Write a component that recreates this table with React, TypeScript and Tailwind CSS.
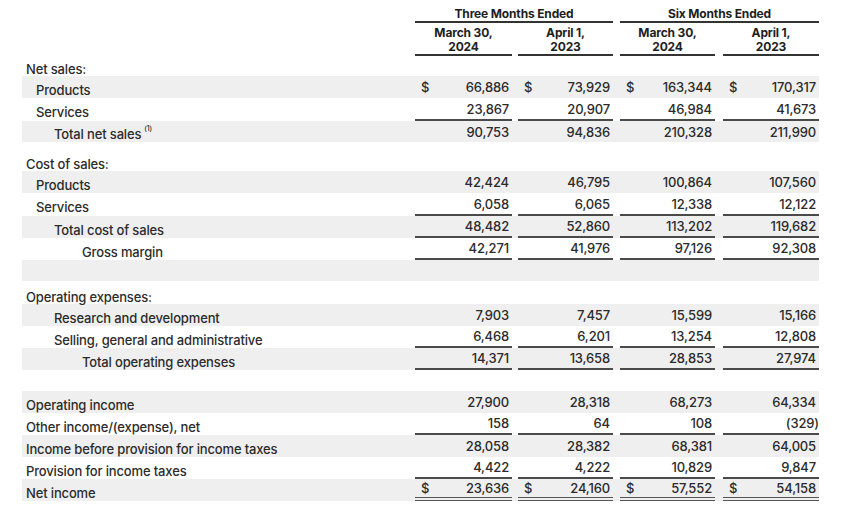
import React from 'react';

// ============================================================================
// ESTADO DE RESULTADOS CONDENSADO
// ============================================================================

type Line = 'none' | 'single' | 'double';

interface RowDef {
  label?: string;
  indent?: number;
  values?: string[];
  dollar?: boolean;
  line?: Line;
  stripe?: boolean;
  height: string;
  section?: boolean;
  note?: boolean;
}

const indentClasses = ['pl-[4px]', 'pl-[14px]', 'pl-[32px]', 'pl-[60px]'];
const cellClasses = ['w-[97px]', 'ml-[6px] w-[95px]', 'ml-[7px] w-[95px]', 'ml-[8px] w-[96px]'];

const rows: RowDef[] = [
  { label: 'Net sales:', indent: 0, section: true, height: 'h-[20px]' },
  { label: 'Products', indent: 1, values: ['66,886', '73,929', '163,344', '170,317'], dollar: true, stripe: true, height: 'h-[22px]' },
  { label: 'Services', indent: 1, values: ['23,867', '20,907', '46,984', '41,673'], line: 'single', height: 'h-[23px]' },
  { label: 'Total net sales', indent: 2, values: ['90,753', '94,836', '210,328', '211,990'], stripe: true, note: true, height: 'h-[21px]' },
  { label: 'Cost of sales:', indent: 0, section: true, height: 'h-[29px]' },
  { label: 'Products', indent: 1, values: ['42,424', '46,795', '100,864', '107,560'], stripe: true, height: 'h-[22px]' },
  { label: 'Services', indent: 1, values: ['6,058', '6,065', '12,338', '12,122'], line: 'single', height: 'h-[23px]' },
  { label: 'Total cost of sales', indent: 2, values: ['48,482', '52,860', '113,202', '119,682'], line: 'single', stripe: true, height: 'h-[22px]' },
  { label: 'Gross margin', indent: 3, values: ['42,271', '41,976', '97,126', '92,308'], line: 'single', height: 'h-[22px]' },
  { stripe: true, height: 'h-[21px]' },
  { label: 'Operating expenses:', indent: 0, section: true, height: 'h-[23px]' },
  { label: 'Research and development', indent: 2, values: ['7,903', '7,457', '15,599', '15,166'], stripe: true, height: 'h-[22px]' },
  { label: 'Selling, general and administrative', indent: 2, values: ['6,468', '6,201', '13,254', '12,808'], line: 'single', height: 'h-[22px]' },
  { label: 'Total operating expenses', indent: 3, values: ['14,371', '13,658', '28,853', '27,974'], line: 'single', stripe: true, height: 'h-[22px]' },
  { height: 'h-[21px]' },
  { label: 'Operating income', indent: 0, values: ['27,900', '28,318', '68,273', '64,334'], stripe: true, height: 'h-[22px]' },
  { label: 'Other income/(expense), net', indent: 0, values: ['158', '64', '108', '(329)'], line: 'single', height: 'h-[22px]' },
  { label: 'Income before provision for income taxes', indent: 0, values: ['28,058', '28,382', '68,381', '64,005'], stripe: true, height: 'h-[22px]' },
  { label: 'Provision for income taxes', indent: 0, values: ['4,422', '4,222', '10,829', '9,847'], line: 'single', height: 'h-[22px]' },
  { label: 'Net income', indent: 0, values: ['23,636', '24,160', '57,552', '54,158'], dollar: true, line: 'double', stripe: true, height: 'h-[22px]' },
];

const lineClass = (line?: Line) => {
  if (line === 'single') return 'border-b-2 border-[#4a4a4a]';
  if (line === 'double') return 'border-b-4 border-double border-[#555]';
  return '';
};

const ValueCell: React.FC<{ idx: number; value: string; dollar?: boolean; line?: Line }> = ({ idx, value, dollar, line }) => {
  const neg = value.startsWith('(');
  return (
    <div className={`${cellClasses[idx]} h-full flex items-center justify-between pt-[2px] pl-[6px] pr-[3px] ${lineClass(line)}`}>
      <span>{dollar ? '$' : ''}</span>
      <span className={neg ? '-mr-[3px]' : ''}>{value}</span>
    </div>
  );
};

export default function App() {
  return (
    <div className="w-[848px] min-h-[515px] bg-white pl-[22px] text-[13px] font-medium tracking-[-0.15px] text-[#2b2b2b] font-['Inter',sans-serif]">
      {/* Encabezado de periodos */}
      <div className="flex">
        <div className="w-[393px]" />
        <div className="w-[198px] h-[23px] pt-[7px] leading-[14px] text-[12px] font-bold text-center text-[#1e1e1e] border-b-2 border-[#333]">
          Three Months Ended
        </div>
        <div className="ml-[7px] w-[199px] h-[23px] pt-[7px] leading-[14px] text-[12px] font-bold text-center text-[#1e1e1e] border-b-2 border-[#333]">
          Six Months Ended
        </div>
      </div>
      <div className="flex">
        <div className="w-[393px]" />
        {[
          ['March 30,', '2024'],
          ['April 1,', '2023'],
          ['March 30,', '2024'],
          ['April 1,', '2023'],
        ].map(([a, b], i) => (
          <div
            key={i}
            className={`${cellClasses[i]} h-[33px] pt-[3px] leading-[14px] text-[12px] font-bold text-center text-[#1e1e1e] border-b-2 border-[#333]`}
          >
            <div>{a}</div>
            <div>{b}</div>
          </div>
        ))}
      </div>

      {/* Filas */}
      {rows.map((row, i) => (
        <div key={i} className={`w-[797px] flex ${row.height} ${row.stripe ? 'bg-[#efefef]' : ''}`}>
          <div
            className={`w-[393px] flex ${row.section ? 'items-end' : 'items-center pt-[5px]'} ${indentClasses[row.indent ?? 0]} leading-[14px] whitespace-nowrap`}
          >
            {row.label}
            {row.note && <sup className="ml-[3px] text-[7px] -top-[5px]">(1)</sup>}
          </div>
          {row.values &&
            row.values.map((v, j) => (
              <ValueCell key={j} idx={j} value={v} dollar={row.dollar} line={row.line} />
            ))}
        </div>
      ))}
    </div>
  );
}
